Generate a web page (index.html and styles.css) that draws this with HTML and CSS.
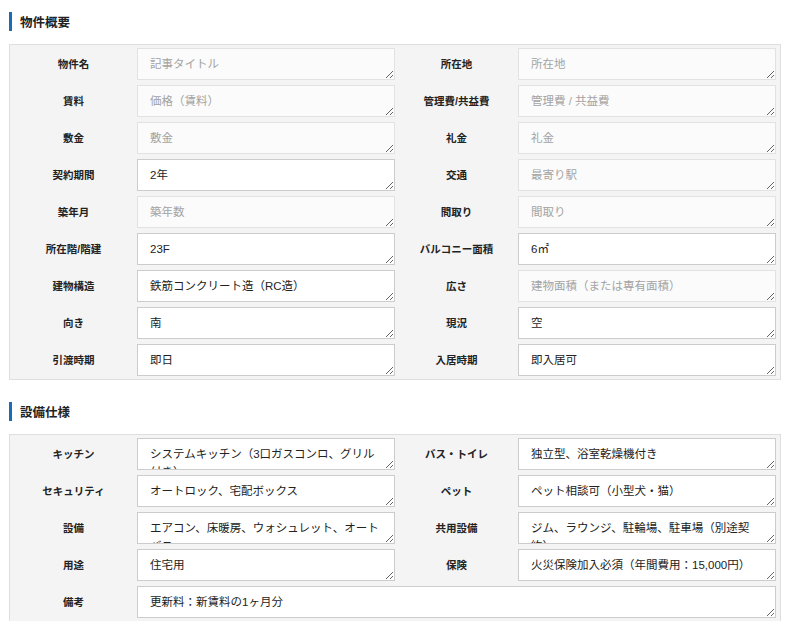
FILE: index.html
```html
<!DOCTYPE html>
<html lang="ja">
<head>
<meta charset="utf-8">
<title>物件概要</title>
<link rel="stylesheet" href="styles.css">
</head>
<body>
<div class="page">
  <section class="section">
    <h2 class="section-title">物件概要</h2>
    <div class="panel">
      <div class="grid">
        <div class="label">物件名</div>
        <textarea class="field" placeholder="記事タイトル"></textarea>
        <div class="label">所在地</div>
        <textarea class="field" placeholder="所在地"></textarea>

        <div class="label">賃料</div>
        <textarea class="field" placeholder="価格（賃料）"></textarea>
        <div class="label">管理費/共益費</div>
        <textarea class="field" placeholder="管理費 / 共益費"></textarea>

        <div class="label">敷金</div>
        <textarea class="field" placeholder="敷金"></textarea>
        <div class="label">礼金</div>
        <textarea class="field" placeholder="礼金"></textarea>

        <div class="label">契約期間</div>
        <textarea class="field filled">2年</textarea>
        <div class="label">交通</div>
        <textarea class="field" placeholder="最寄り駅"></textarea>

        <div class="label">築年月</div>
        <textarea class="field" placeholder="築年数"></textarea>
        <div class="label">間取り</div>
        <textarea class="field" placeholder="間取り"></textarea>

        <div class="label">所在階/階建</div>
        <textarea class="field filled">23F</textarea>
        <div class="label">バルコニー面積</div>
        <textarea class="field filled">6㎡</textarea>

        <div class="label">建物構造</div>
        <textarea class="field filled">鉄筋コンクリート造（RC造）</textarea>
        <div class="label">広さ</div>
        <textarea class="field" placeholder="建物面積（または専有面積）"></textarea>

        <div class="label">向き</div>
        <textarea class="field filled">南</textarea>
        <div class="label">現況</div>
        <textarea class="field filled">空</textarea>

        <div class="label">引渡時期</div>
        <textarea class="field filled">即日</textarea>
        <div class="label">入居時期</div>
        <textarea class="field filled">即入居可</textarea>
      </div>
    </div>
  </section>

  <section class="section">
    <h2 class="section-title">設備仕様</h2>
    <div class="panel">
      <div class="grid">
        <div class="label">キッチン</div>
        <textarea class="field filled">システムキッチン（3口ガスコンロ、グリル付き）</textarea>
        <div class="label">バス・トイレ</div>
        <textarea class="field filled">独立型、浴室乾燥機付き</textarea>

        <div class="label">セキュリティ</div>
        <textarea class="field filled">オートロック、宅配ボックス</textarea>
        <div class="label">ペット</div>
        <textarea class="field filled">ペット相談可（小型犬・猫）</textarea>

        <div class="label">設備</div>
        <textarea class="field filled">エアコン、床暖房、ウォシュレット、オートバス</textarea>
        <div class="label">共用設備</div>
        <textarea class="field filled">ジム、ラウンジ、駐輪場、駐車場（別途契約）</textarea>

        <div class="label">用途</div>
        <textarea class="field filled">住宅用</textarea>
        <div class="label">保険</div>
        <textarea class="field filled">火災保険加入必須（年間費用：15,000円）</textarea>

        <div class="label">備考</div>
        <textarea class="field filled wide">更新料：新賃料の1ヶ月分</textarea>
      </div>
    </div>
  </section>
</div>
</body>
</html>
```

FILE: styles.css
```css
html, body {
  margin: 0;
  padding: 0;
  background: #ffffff;
}

body {
  font-family: "Liberation Sans", "Noto Sans CJK JP", sans-serif;
  color: #222222;
}

.page {
  padding: 12px 9px 0 9px;
}

.section + .section {
  margin-top: 22px;
}

.section-title {
  margin: 0 0 13px 0;
  height: 19px;
  display: flex;
  align-items: center;
  border-left: 3px solid #1b6cb3;
  padding-left: 8px;
  font-size: 12.5px;
  font-weight: bold;
  color: #222222;
}

.panel {
  background: #f4f4f4;
  border: 1px solid #dedede;
  padding: 3px 4px 3px 0;
}

.grid {
  display: grid;
  grid-template-columns: 127px 258px 123px 258px;
  row-gap: 5px;
}

.label {
  display: flex;
  align-items: center;
  justify-content: center;
  padding-bottom: 1px;
  font-size: 10.5px;
  font-weight: bold;
  color: #222222;
}

.field {
  box-sizing: border-box;
  display: block;
  width: 258px;
  height: 32px;
  margin: 0;
  padding: 6px 12px;
  border: 1px solid #e2e2e2;
  border-radius: 0;
  background: #fbfbfb;
  font-family: "Liberation Sans", "Noto Sans CJK JP", sans-serif;
  font-size: 11.5px;
  line-height: 18px;
  color: #222222;
  overflow: hidden;
  resize: both;
  outline: none;
}

.field::placeholder {
  color: #a3a3a3;
}

.field.filled {
  background: #ffffff;
  border-color: #cccccc;
}

.field.wide {
  grid-column: 2 / 5;
  width: 100%;
}
```
